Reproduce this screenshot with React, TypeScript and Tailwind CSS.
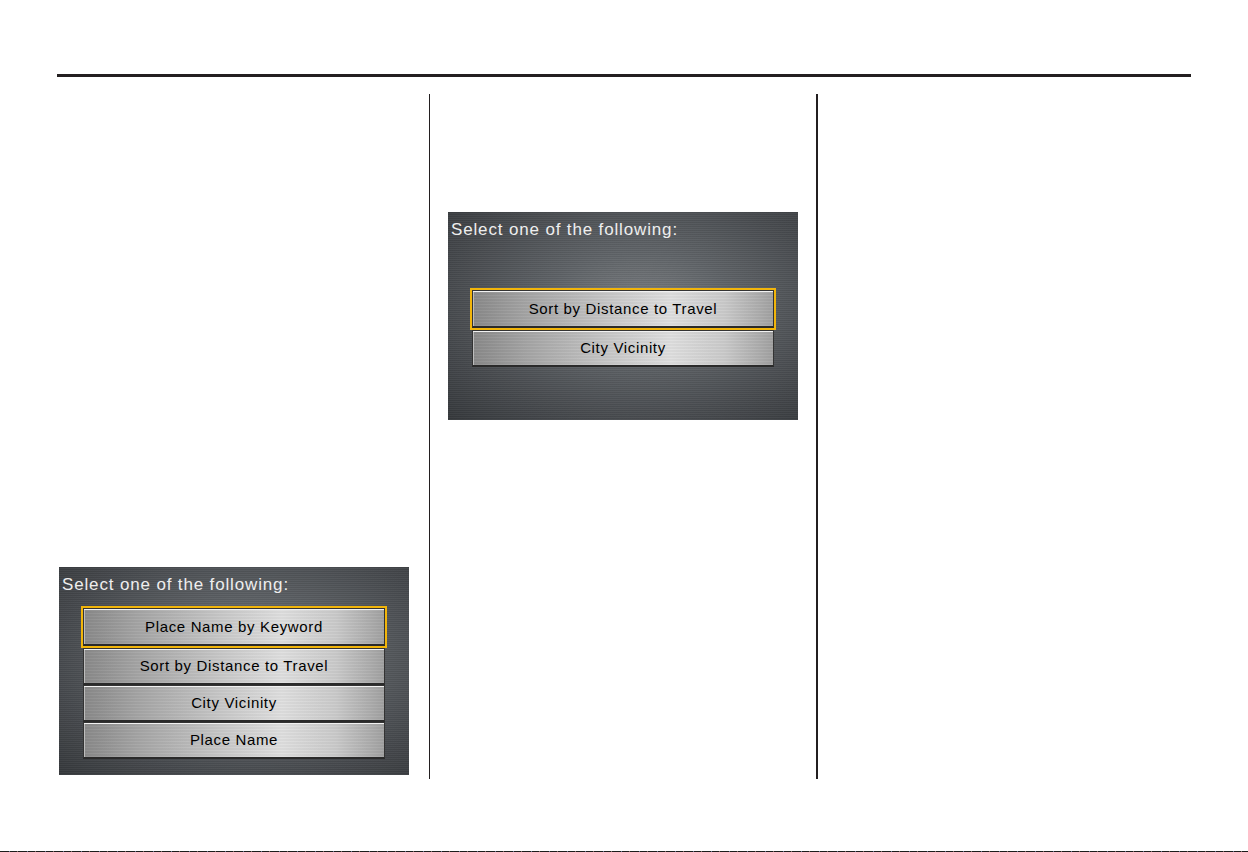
import clsx from "clsx";

// brushed dark panel of the nav display
const PANEL_BG =
  "bg-[repeating-linear-gradient(0deg,rgba(255,255,255,0.03)_0px,rgba(255,255,255,0.03)_1px,rgba(0,0,0,0.05)_1px,rgba(0,0,0,0.05)_2px),radial-gradient(ellipse_at_55%_45%,#7a7e82_0%,#5f6367_35%,#45484c_75%,#36393c_100%)]";

// brushed metal key
const KEY_BG =
  "bg-[repeating-linear-gradient(0deg,rgba(255,255,255,0.04)_0px,rgba(255,255,255,0.04)_1px,rgba(0,0,0,0.03)_1px,rgba(0,0,0,0.03)_3px),linear-gradient(90deg,#8a8a8a_0%,#a6a6a6_18%,#c8c8c8_45%,#e0e0e0_66%,#cbcbcb_84%,#a2a2a2_100%)]";

interface NavScreenProps {
  options: string[];
  selected: number;
  listTop: string;
}

function NavScreen({ options, selected, listTop }: NavScreenProps) {
  return (
    <div className={clsx("flex h-[208px] w-[350px] flex-col", PANEL_BG)}>
      <p className="pl-[3px] pt-[8px] text-[17px] leading-[20px] tracking-[0.85px] text-[#eeeeee]">
        Select one of the following:
      </p>
      <ul className={clsx("ml-[22px] w-[306px]", listTop)}>
        {options.map((label, i) => (
          <li
            key={label}
            className={clsx(
              i === selected ? "border-2 border-[#f2b50a]" : "px-[2px]"
            )}
          >
            <div
              className={clsx(
                "flex items-center justify-center border border-[#333333] border-b-2 border-b-[#2a2a2a] pt-px text-[15px] tracking-[0.65px] text-black shadow-[inset_0_1px_0_#f2f2f2,inset_1px_0_0_#bdbdbd]",
                i === selected ? "h-[38px]" : "h-[37px]",
                KEY_BG
              )}
            >
              {label}
            </div>
          </li>
        ))}
      </ul>
    </div>
  );
}

export default function App() {
  return (
    <div className="flex h-[852px] w-[1248px] flex-col bg-white font-['Liberation_Sans',Arial,sans-serif]">
      <div className="px-[57px] pt-[74px]">
        <div className="h-[3px] bg-[#231f20]" />
        <div className="mt-[17px] flex h-[685px]">
          <div className="w-[373px] border-r border-[#231f20] pl-[2px] pt-[473px]">
            <NavScreen
              options={[
                "Place Name by Keyword",
                "Sort by Distance to Travel",
                "City Vicinity",
                "Place Name",
              ]}
              selected={0}
              listTop="mt-[11px]"
            />
          </div>
          <div className="w-[388px] border-r-2 border-[#231f20] pl-[18px] pt-[118px]">
            <NavScreen
              options={["Sort by Distance to Travel", "City Vicinity"]}
              selected={0}
              listTop="mt-[48px]"
            />
          </div>
          <div className="flex-1" />
        </div>
      </div>
      <div className="mt-auto h-px bg-[repeating-linear-gradient(90deg,#1c1c1c_0px,#1c1c1c_9px,#6f7a9a_9px,#6f7a9a_10px,#1c1c1c_10px,#1c1c1c_17px,#8a6d6d_17px,#8a6d6d_18px)]" />
    </div>
  );
}
